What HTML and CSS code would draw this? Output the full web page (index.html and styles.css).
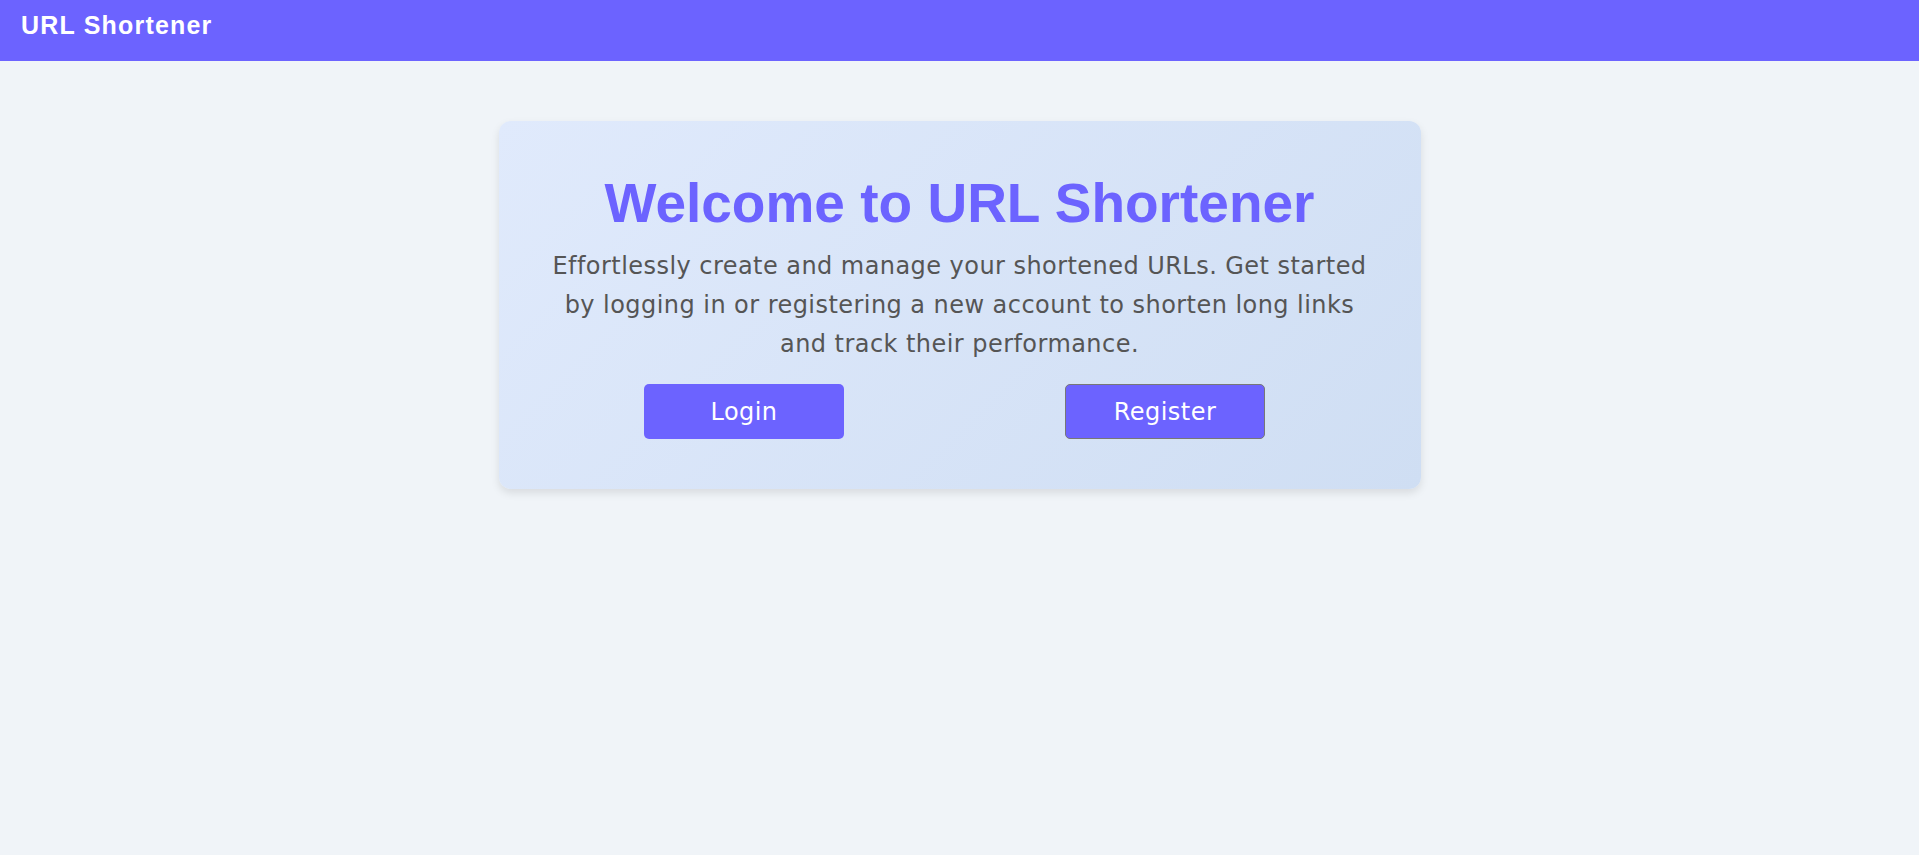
FILE: index.html
```html
<!DOCTYPE html>
<html lang="en">
<head>
<meta charset="utf-8">
<title>URL Shortener</title>
<link rel="stylesheet" href="styles.css">
</head>
<body>
<header class="topbar">
  <div class="brand">URL Shortener</div>
</header>
<main class="main">
  <section class="card">
    <h1 class="title">Welcome to URL Shortener</h1>
    <p class="lead">Effortlessly create and manage your shortened URLs. Get started by logging in or registering a new account to shorten long links and track their performance.</p>
    <div class="actions">
      <a class="btn" href="#">Login</a>
      <button class="btn btn-outline" type="button">Register</button>
    </div>
  </section>
</main>
</body>
</html>
```

FILE: styles.css
```css
* { box-sizing: border-box; }
html, body { margin: 0; padding: 0; }
body {
  background: #f0f4f8;
  font-family: "DejaVu Sans", Verdana, sans-serif;
  min-height: 855px;
}
.topbar {
  background: #6c63ff;
  height: 61px;
  padding: 11px 21px 0;
}
.brand {
  color: #fff;
  font-family: "Liberation Sans", Arial, sans-serif;
  font-weight: bold;
  font-size: 25px;
  letter-spacing: 1.2px;
}
.main {
  display: flex;
  justify-content: center;
  padding-top: 60px;
}
.card {
  width: 922px;
  padding: 50px 40px;
  border-radius: 12px;
  background: linear-gradient(135deg, #e0eafc, #cfdef3);
  box-shadow: 0 4px 8px rgba(0, 0, 0, 0.1);
  text-align: center;
}
.title {
  margin: 0;
  font-family: "Liberation Sans", Arial, sans-serif;
  font-weight: bold;
  font-size: 55px;
  color: #6c63ff;
}
.lead {
  max-width: 834px;
  margin: 12px auto 20px;
  font-size: 24px;
  letter-spacing: 0.45px;
  line-height: 39px;
  color: #555;
}
.actions {
  display: flex;
  justify-content: space-around;
}
.btn {
  display: flex;
  align-items: center;
  justify-content: center;
  width: 200px;
  height: 55px;
  margin-right: 10px;
  background: #6c63ff;
  color: #fff;
  border: none;
  border-radius: 5px;
  font-family: "DejaVu Sans", Verdana, sans-serif;
  font-size: 24px;
  letter-spacing: 0.45px;
  text-decoration: none;
  cursor: pointer;
}
.btn-outline {
  border: 1px solid #777;
}
```
